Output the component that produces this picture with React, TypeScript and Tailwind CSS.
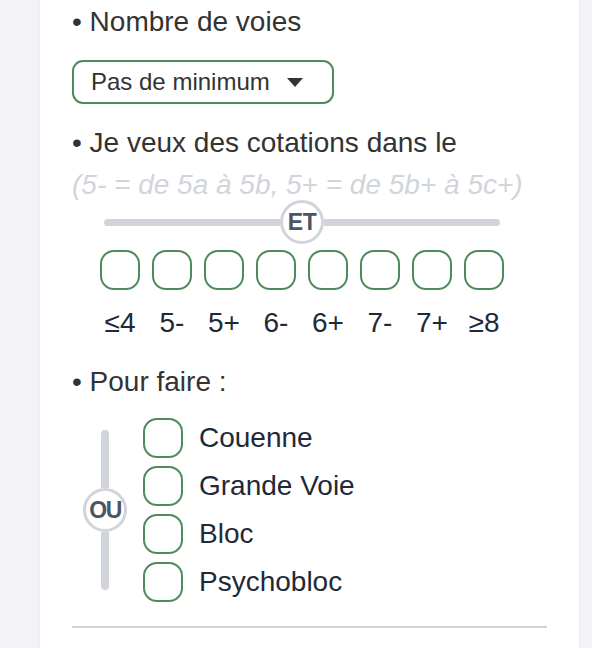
import React, { useState } from 'react';

const GRADES = ['≤4', '5-', '5+', '6-', '6+', '7-', '7+', '≥8'];
const STYLES = ['Couenne', 'Grande Voie', 'Bloc', 'Psychobloc'];

const Box: React.FC<{ checked: boolean; onClick: () => void }> = ({ checked, onClick }) => (
  <button
    onClick={onClick}
    className={`w-[40px] h-[40px] shrink-0 rounded-[14px] border-2 border-[#4f8a5b] ${
      checked ? 'bg-[#4f8a5b]' : 'bg-white'
    }`}
  />
);

export default function App() {
  const [grades, setGrades] = useState<boolean[]>(GRADES.map(() => false));
  const [styles, setStyles] = useState<boolean[]>(STYLES.map(() => false));

  const toggle = (arr: boolean[], i: number) => arr.map((v, idx) => (idx === i ? !v : v));

  return (
    <div
      className="min-h-[648px] bg-[#f2f2f7] pl-[40px] pr-[13px]"
      style={{ fontFamily: '"Liberation Sans", Arial, sans-serif' }}
    >
      <div className="bg-white min-h-[648px] shadow-[0_0_4px_rgba(0,0,0,0.06)] px-[32px] pt-px pb-[20px]">
        {/* Nombre de voies */}
        <p className="text-[28px] leading-[42px] text-[#333333]">• Nombre de voies</p>
        <button className="mt-[17px] h-[44px] w-[262px] flex items-center pl-[17px] rounded-[11px] border-2 border-[#4f8a5b] bg-white text-[24px] text-[#333333]">
          Pas de minimum
          <svg width="16" height="9" viewBox="0 0 16 9" className="ml-[17px]">
            <path d="M0 0 L16 0 L8 9 Z" fill="#333333" />
          </svg>
        </button>

        {/* Cotations */}
        <p className="mt-[18px] text-[28px] leading-[42px] text-[#333333]">• Je veux des cotations dans le</p>
        <p className="text-[28px] leading-[42px] italic text-[#d1d5db] whitespace-nowrap">
          (5- = de 5a à 5b, 5+ = de 5b+ à 5c+)
        </p>

        <div className="ml-[28px] w-[404px]">
          <div className="-mt-[6px] h-[44px] flex items-center px-[4px]">
            <div className="flex-1 h-[7px] rounded-l-full bg-[#d1d5db]" />
            <div className="w-[44px] h-[44px] shrink-0 rounded-full border-[3px] border-[#d1d5db] bg-white flex items-center justify-center text-[23px] font-bold text-[#4b5563] tracking-[-0.5px]">
              ET
            </div>
            <div className="flex-1 h-[7px] rounded-r-full bg-[#d1d5db]" />
          </div>
          <div className="mt-[6px] flex gap-[12px]">
            {GRADES.map((g, i) => (
              <Box key={g} checked={grades[i]} onClick={() => setGrades(toggle(grades, i))} />
            ))}
          </div>
          <div className="mt-[12px] flex gap-[12px]">
            {GRADES.map((g) => (
              <span
                key={g}
                className="w-[40px] shrink-0 whitespace-nowrap text-[28px] leading-[42px] text-[#1f2937] flex justify-center"
              >
                {g}
              </span>
            ))}
          </div>
        </div>

        {/* Pour faire */}
        <p className="mt-[17px] text-[28px] leading-[42px] text-[#333333]">• Pour faire :</p>
        <div className="mt-[15px] ml-[11px] flex gap-[16px]">
          <div className="w-[44px] flex flex-col items-center py-[12px]">
            <div className="flex-1 w-[8px] rounded-t-full bg-[#d1d5db]" />
            <div className="w-[44px] h-[44px] shrink-0 rounded-full border-[3px] border-[#d1d5db] bg-white flex items-center justify-center text-[23px] font-bold text-[#4b5563] tracking-[-1.5px]">
              OU
            </div>
            <div className="flex-1 w-[8px] rounded-b-full bg-[#d1d5db]" />
          </div>
          <div className="flex flex-col gap-[8px]">
            {STYLES.map((s, i) => (
              <label key={s} className="flex items-center gap-[16px] cursor-pointer">
                <Box checked={styles[i]} onClick={() => setStyles(toggle(styles, i))} />
                <span className="text-[28px] leading-[40px] text-[#1f2937]">{s}</span>
              </label>
            ))}
          </div>
        </div>

        <div className="mt-[24px] h-[2px] bg-[#d1d5db]" />
      </div>
    </div>
  );
}
